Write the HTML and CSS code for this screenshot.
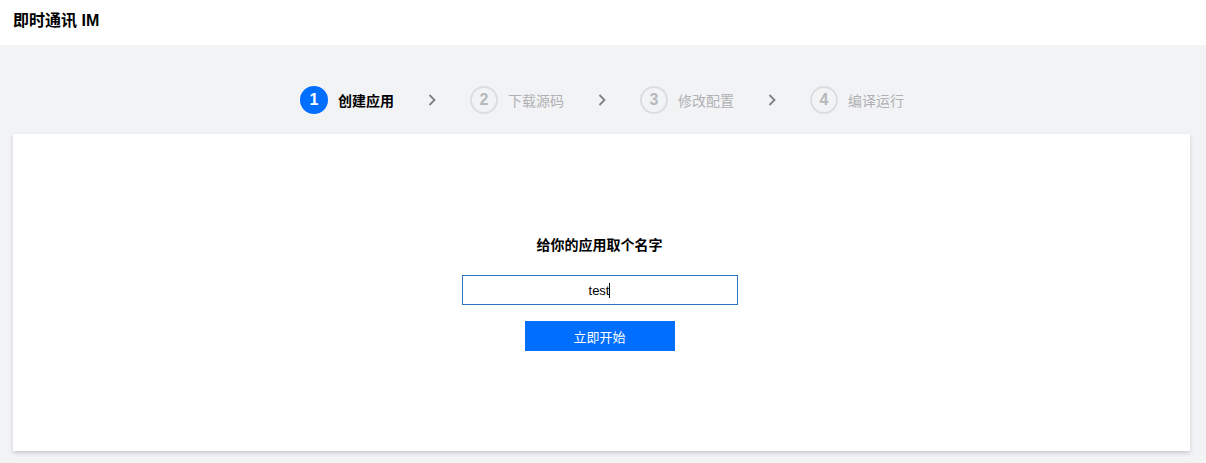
FILE: index.html
```html
<!DOCTYPE html>
<html lang="zh-CN">
<head>
<meta charset="utf-8">
<title>即时通讯 IM</title>
<link rel="stylesheet" href="styles.css">
</head>
<body>
<header class="topbar">
  <h1 class="title">即时通讯 IM</h1>
</header>
<main class="main">
  <nav class="steps">
    <div class="step active"><span class="num">1</span><span class="label">创建应用</span></div>
    <span class="arrow"><svg width="10" height="14" viewBox="0 0 10 14"><path d="M2.5 2 L7.5 7 L2.5 12" fill="none" stroke="#7d7f84" stroke-width="1.8"/></svg></span>
    <div class="step"><span class="num">2</span><span class="label">下载源码</span></div>
    <span class="arrow"><svg width="10" height="14" viewBox="0 0 10 14"><path d="M2.5 2 L7.5 7 L2.5 12" fill="none" stroke="#7d7f84" stroke-width="1.8"/></svg></span>
    <div class="step"><span class="num">3</span><span class="label">修改配置</span></div>
    <span class="arrow"><svg width="10" height="14" viewBox="0 0 10 14"><path d="M2.5 2 L7.5 7 L2.5 12" fill="none" stroke="#7d7f84" stroke-width="1.8"/></svg></span>
    <div class="step"><span class="num">4</span><span class="label">编译运行</span></div>
  </nav>
  <section class="card">
    <h2 class="card-title">给你的应用取个名字</h2>
    <div class="input"><span class="value">test</span><span class="caret"></span></div>
    <button class="btn">立即开始</button>
  </section>
</main>
</body>
</html>
```
FILE: styles.css
```css
* { box-sizing: border-box; }
html, body { margin: 0; padding: 0; }
body {
  background: #f2f3f5;
  font-family: "Liberation Sans", "Noto Sans CJK SC", sans-serif;
  color: #000;
  height: 463px;
  overflow: hidden;
}
.topbar {
  height: 45px;
  background: #fff;
  display: flex;
  align-items: center;
  padding-left: 13px;
}
.title {
  margin: 0;
  font-size: 16px;
  font-weight: bold;
  color: #000;
  line-height: 20px;
  padding-bottom: 4px;
}
.main {
  padding: 0 16px 0 13px;
}
.steps {
  height: 89px;
  display: flex;
  align-items: center;
  justify-content: center;
  padding-top: 20px;
  padding-left: 1px;
}
.step {
  display: flex;
  align-items: center;
  gap: 10px;
}
.num {
  width: 28px;
  height: 28px;
  border-radius: 50%;
  border: 2px solid #dcdde0;
  color: #b7b8bb;
  font-size: 16px;
  font-weight: bold;
  display: flex;
  align-items: center;
  justify-content: center;
  font-family: "Liberation Sans", sans-serif;
}
.label {
  font-size: 14px;
  color: #b0b1b4;
  font-family: "Noto Sans CJK SC", sans-serif;
  line-height: 20px;
}
.step.active .num {
  background: #006eff;
  border-color: #006eff;
  color: #fff;
}
.step.active .label {
  color: #000;
  font-weight: bold;
}
.arrow {
  display: flex;
  margin: 0 33px 0 33px;
}
.card {
  background: #fff;
  box-shadow: 0 2px 4px rgba(54, 58, 80, 0.22);
  height: 317px;
  padding-top: 100px;
  padding-right: 4px;
  display: flex;
  flex-direction: column;
  align-items: center;
}
.card-title {
  margin: 0 0 21px;
  font-size: 14px;
  line-height: 20px;
  font-weight: bold;
  font-family: "Noto Sans CJK SC", sans-serif;
  color: #000;
}
.input {
  width: 276px;
  height: 30px;
  border: 1px solid #2f77bd;
  display: flex;
  align-items: center;
  justify-content: center;
  font-size: 13px;
  color: #000;
  font-family: "Liberation Sans", sans-serif;
}
.caret {
  display: inline-block;
  width: 1px;
  height: 15px;
  background: #000;
}
.btn {
  margin-top: 16px;
  width: 150px;
  height: 30px;
  border: none;
  background: #006eff;
  color: #fff;
  font-size: 13px;
  font-family: "Noto Sans CJK SC", sans-serif;
  padding: 0;
}
```
